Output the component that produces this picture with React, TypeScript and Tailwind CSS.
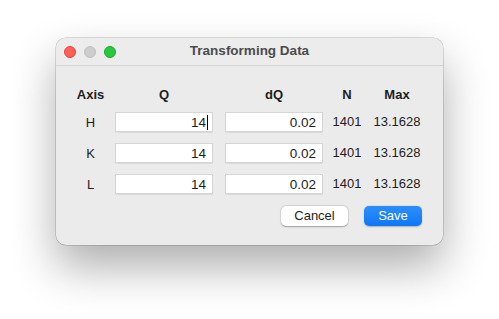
import React from "react";

const rows = [
  { axis: "H", q: "14", dq: "0.02", n: "1401", max: "13.1628", cursor: true },
  { axis: "K", q: "14", dq: "0.02", n: "1401", max: "13.1628", cursor: false },
  { axis: "L", q: "14", dq: "0.02", n: "1401", max: "13.1628", cursor: false },
];

function Field({ value, cursor }: { value: string; cursor?: boolean }) {
  return (
    <div className="w-[98px] h-[20px] bg-white border border-[#d6d6d6] shadow-[0_0.5px_1px_rgba(0,0,0,0.08)] flex items-center justify-end pr-[4px] pt-[2px] text-[13.5px] text-[#1d1d1d]">
      <span>{value}</span>
      {cursor ? <span className="w-[1px] h-[15px] bg-black ml-[1px] -mt-[2px]" /> : <span className="w-[2px]" />}
    </div>
  );
}

export default function App() {
  return (
    <div
      className="w-[499px] h-[319px] bg-white pt-[38px] pl-[56px]"
      style={{ fontFamily: '"Liberation Sans", Arial, sans-serif' }}
    >
      <div className="w-[387px] h-[207px] rounded-[10px] bg-[#ebebeb] shadow-[0_22px_45px_rgba(0,0,0,0.32),0_0_0_0.5px_rgba(0,0,0,0.25)] flex flex-col overflow-hidden">
        <div className="h-[28px] relative flex items-center justify-center border-b border-[#d3d3d3] bg-[#ececec]">
          <div className="absolute left-[8px] top-[8px] flex gap-[8px]">
            <span className="w-[12px] h-[12px] rounded-full bg-[#fe5f57] border border-[#e0443e]" />
            <span className="w-[12px] h-[12px] rounded-full bg-[#cdcdcd] border border-[#bfbfbf]" />
            <span className="w-[12px] h-[12px] rounded-full bg-[#28c840] border border-[#1aab29]" />
          </div>
          <span className="text-[13.5px] font-bold text-[#4b4b4b]">Transforming Data</span>
        </div>
        <div className="flex flex-col pl-[10px] pt-[19px] text-[13px] text-[#1d1d1d]">
          <div className="flex items-center h-[20px] font-bold">
            <div className="w-[49px] text-center">Axis</div>
            <div className="w-[98px] text-center">Q</div>
            <div className="w-[12px]" />
            <div className="w-[98px] text-center">dQ</div>
            <div className="w-[48px] text-center">N</div>
            <div className="w-[52px] text-center">Max</div>
          </div>
          <div className="flex flex-col gap-[11px] mt-[7px]">
            {rows.map((r) => (
              <div key={r.axis} className="flex items-center h-[20px]">
                <div className="w-[49px] text-center pt-[1px]">{r.axis}</div>
                <Field value={r.q} cursor={r.cursor} />
                <div className="w-[12px]" />
                <Field value={r.dq} />
                <div className="w-[48px] text-center">{r.n}</div>
                <div className="w-[52px] text-center">{r.max}</div>
              </div>
            ))}
          </div>
          <div className="flex justify-end gap-[16px] mt-[12px] pr-[21px]">
            <button className="w-[67px] h-[20px] rounded-[5px] bg-white text-[13px] text-[#1d1d1d] shadow-[0_0.5px_1.5px_rgba(0,0,0,0.3),0_0_0_0.5px_rgba(0,0,0,0.08)]">
              Cancel
            </button>
            <button className="w-[58px] h-[20px] rounded-[5px] bg-gradient-to-b from-[#2b8efd] to-[#0f77f5] text-[13px] text-white shadow-[0_0.5px_1.5px_rgba(0,0,0,0.25)]">
              Save
            </button>
          </div>
        </div>
      </div>
    </div>
  );
}
